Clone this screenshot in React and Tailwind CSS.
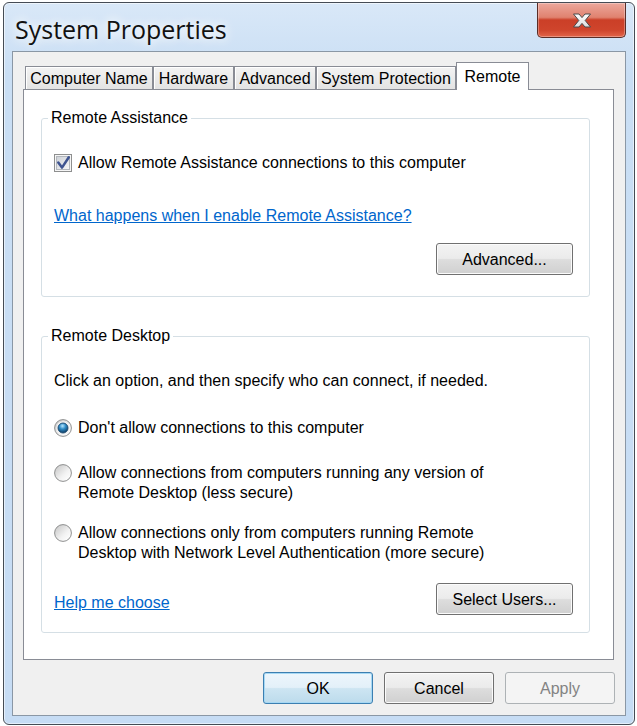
import React from "react";

const FONT = "[font-family:'Liberation_Sans',Arial,sans-serif] text-[16px] leading-[20px]";
const BODY = `${FONT} text-black`;

function Checkbox() {
  return (
    <svg width="18" height="18" viewBox="0 0 18 18" className="shrink-0">
      <defs>
        <linearGradient id="cbIn" x1="0" y1="0" x2="1" y2="1">
          <stop offset="0" stopColor="#cdd1d7" />
          <stop offset="1" stopColor="#f7f7f7" />
        </linearGradient>
      </defs>
      <rect x="0.5" y="0.5" width="17" height="17" fill="#f6f6f6" stroke="#8e8f8f" />
      <rect x="2.5" y="2.5" width="13" height="13" fill="url(#cbIn)" stroke="#b3b7bd" />
      <path
        d="M4.3 8.6 L8 13.6 L14.8 3.2"
        fill="none"
        stroke="#3f5490"
        strokeWidth="2.5"
        strokeLinejoin="round"
        strokeLinecap="round"
      />
    </svg>
  );
}

function Radio({ checked }) {
  return (
    <svg width="18" height="18" viewBox="0 0 18 18" className="shrink-0 mt-[1px]">
      <defs>
        <linearGradient id="rdOut" x1="0.1" y1="0.1" x2="0.9" y2="0.9">
          <stop offset="0" stopColor="#cbcbcb" />
          <stop offset="0.6" stopColor="#f2f2f2" />
          <stop offset="1" stopColor="#ffffff" />
        </linearGradient>
        <radialGradient id="rdDot" cx="0.45" cy="0.3" r="0.7">
          <stop offset="0" stopColor="#b4e6ff" />
          <stop offset="0.45" stopColor="#2f8bc6" />
          <stop offset="1" stopColor="#0d3a60" />
        </radialGradient>
      </defs>
      <circle cx="9" cy="9" r="8.4" fill="url(#rdOut)" stroke="#8e8f8f" />
      {checked && (
        <>
          <circle cx="9" cy="9" r="6.6" fill="#f4f4f4" />
          <circle cx="9" cy="9" r="5" fill="url(#rdDot)" stroke="#1b4a70" strokeWidth="0.9" />
        </>
      )}
    </svg>
  );
}

function WinButton({ children, kind = "normal", width = "w-[110px]" }) {
  const styles = {
    normal:
      "border-[#707070] bg-[linear-gradient(to_bottom,#f3f3f3_0%,#ebebeb_48%,#dddddd_52%,#d0d0d0_100%)] shadow-[inset_0_0_0_1px_#fbfbfb] text-black",
    default:
      "border-[#3c7fb1] bg-[linear-gradient(to_bottom,#edf6fc_0%,#e3f0f9_48%,#cde5f2_52%,#bcdbec_100%)] shadow-[inset_0_0_0_1px_#a6d8f4] text-black",
    disabled: "border-[#adb2b5] bg-[#f4f4f4] text-[#838383]",
  };
  return (
    <button
      type="button"
      className={`${width} h-[32px] pt-[2px] rounded-[3px] border flex items-center justify-center ${FONT} ${styles[kind]}`}
    >
      {children}
    </button>
  );
}

function Tab({ label, width, selected }) {
  if (selected) {
    return (
      <div
        className={`${width} h-[28px] -mb-px relative z-10 bg-white border-t border-l border-r border-[#898c95] flex items-center justify-center`}
      >
        {label}
      </div>
    );
  }
  return (
    <div
      className={`${width} h-[23px] pt-[2px] border-t border-l border-r border-[#898c95] bg-[linear-gradient(to_bottom,#f3f3f3,#e3e3e3)] shadow-[inset_1px_1px_0_#ffffff] flex items-center justify-center`}
    >
      {label}
    </div>
  );
}

function GroupTitle({ children }) {
  return (
    <span className="block w-fit -mt-[10px] ml-[6px] px-[3px] bg-white leading-[18px]">
      {children}
    </span>
  );
}

export default function App() {
  const tabs = [
    { label: "Computer Name", width: "w-[128px]" },
    { label: "Hardware", width: "w-[81px]" },
    { label: "Advanced", width: "w-[82px]" },
    { label: "System Protection", width: "w-[140px]" },
    { label: "Remote", width: "w-[73px]", selected: true },
  ];

  return (
    <div className="w-[637px] h-[726px] bg-white pt-[2px] pl-[3px] overflow-hidden">
      <div className="w-[632px] h-[723px] rounded-[6px] border border-[#454c55] bg-[linear-gradient(to_bottom,#d9e8f8_0%,#c9def4_10%,#c6dcf4_100%)] shadow-[inset_0_0_0_1px_rgba(255,255,255,0.55)] flex flex-col overflow-hidden">
        {/* title bar */}
        <div className="h-[48px] flex justify-between items-start pl-[11px] pr-[8px]">
          <div className="pt-[9px] [font-family:'Open_Sans','Noto_Sans',sans-serif] text-[25px] leading-[34px] text-[#111] [text-shadow:0_0_10px_#ffffff,0_0_14px_#ffffff]">
            System Properties
          </div>
          <button
            type="button"
            className="w-[89px] h-[35px] border border-t-0 border-[#5a2d27] rounded-b-[5px] bg-[linear-gradient(to_bottom,#eca89c_0%,#e0826f_42%,#cb3f27_50%,#cf452c_80%,#e2654a_100%)] shadow-[inset_0_0_0_1px_rgba(255,255,255,0.3)] flex items-center justify-center"
          >
            <svg width="20" height="15" viewBox="0 0 20 15">
              <defs>
                <linearGradient id="xg" x1="0" y1="0" x2="0" y2="1">
                  <stop offset="0" stopColor="#ffffff" />
                  <stop offset="1" stopColor="#dcdcdc" />
                </linearGradient>
              </defs>
              <polygon
                points="1.5,1 7,1 10,4.6 13,1 18.5,1 13.2,7.5 18.5,14 13,14 10,10.4 7,14 1.5,14 6.8,7.5"
                fill="url(#xg)"
                stroke="#4a4a4a"
                strokeWidth="1"
                strokeLinejoin="round"
              />
            </svg>
          </button>
        </div>

        {/* client area */}
        <div className={`mx-[8px] h-[665px] border border-[#8a97a5] bg-[#f0f0f0] flex flex-col ${BODY}`}>
          <div className="ml-[12px] mt-[10px] flex items-end">
            {tabs.map((t) => (
              <Tab key={t.label} label={t.label} width={t.width} selected={t.selected} />
            ))}
          </div>

          <div className="ml-[10px] w-[591px] h-[571px] border border-[#898c95] bg-white flex flex-col">
            {/* Remote Assistance */}
            <div className="ml-[17px] mr-[23px] mt-[28px] border border-[#d5dfe5] rounded-[3px] pb-[21px]">
              <GroupTitle>Remote Assistance</GroupTitle>
              <label className="flex items-center gap-[6px] ml-[12px] mt-[26px] h-[20px]">
                <Checkbox />
                <span>Allow Remote Assistance connections to this computer</span>
              </label>
              <a href="#" className="block w-fit ml-[12px] mt-[33px] text-[#0066cc] underline">
                What happens when I enable Remote Assistance?
              </a>
              <div className="flex justify-end mr-[16px] mt-[17px]">
                <WinButton width="w-[137px]">Advanced...</WinButton>
              </div>
            </div>

            {/* Remote Desktop */}
            <div className="ml-[17px] mr-[23px] mt-[39px] border border-[#d5dfe5] rounded-[3px] pb-[17px]">
              <GroupTitle>Remote Desktop</GroupTitle>
              <p className="ml-[12px] mt-[26px]">
                Click an option, and then specify who can connect, if needed.
              </p>
              <label className="flex items-start gap-[6px] ml-[12px] mt-[27px]">
                <Radio checked />
                <span>Don't allow connections to this computer</span>
              </label>
              <label className="flex items-start gap-[6px] ml-[12px] mt-[25px]">
                <Radio />
                <span>
                  Allow connections from computers running any version of
                  <br />
                  Remote Desktop (less secure)
                </span>
              </label>
              <label className="flex items-start gap-[6px] ml-[12px] mt-[20px]">
                <Radio />
                <span>
                  Allow connections only from computers running Remote
                  <br />
                  Desktop with Network Level Authentication (more secure)
                </span>
              </label>
              <div className="flex justify-between items-start ml-[12px] mr-[16px] mt-[20px]">
                <a href="#" className="mt-[10px] text-[#0066cc] underline">
                  Help me choose
                </a>
                <WinButton width="w-[137px]">Select Users...</WinButton>
              </div>
            </div>
          </div>

          <div className="mt-[12px] flex justify-end gap-[11px] pr-[10px]">
            <WinButton kind="default">OK</WinButton>
            <WinButton>Cancel</WinButton>
            <WinButton kind="disabled">Apply</WinButton>
          </div>
        </div>
      </div>
    </div>
  );
}
